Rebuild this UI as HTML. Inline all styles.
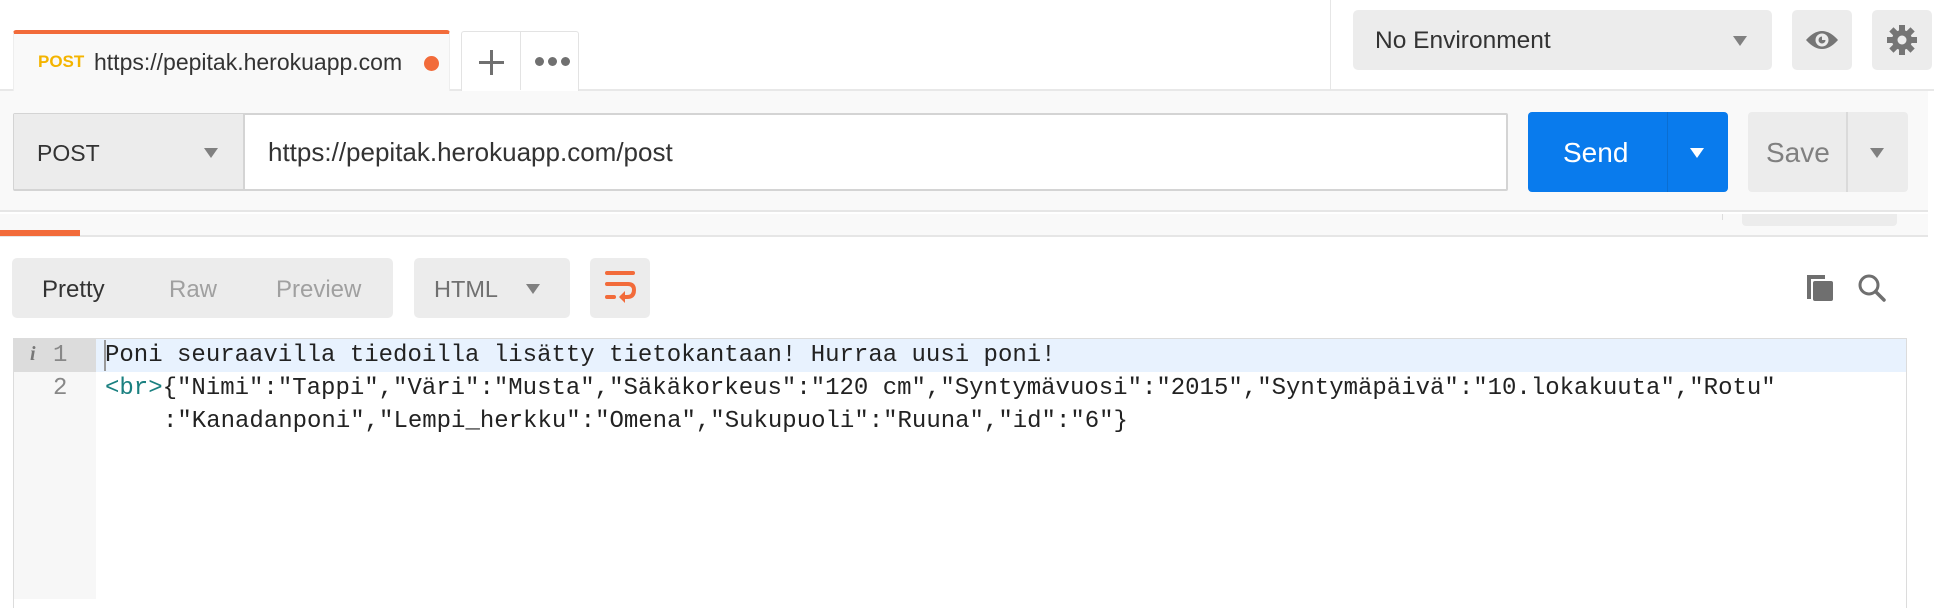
<!DOCTYPE html>
<html><head><meta charset="utf-8"><style>
*{margin:0;padding:0;box-sizing:border-box}
body{width:1934px;height:598px;background:#fff;position:relative;overflow:hidden;font-family:"Liberation Sans",sans-serif;color:#505050}
.a{position:absolute}
.tri{position:absolute;width:0;height:0;border-left:7px solid transparent;border-right:7px solid transparent;border-top:10px solid #808080}
.mono{font-family:"Liberation Mono",monospace;font-size:24px;white-space:pre;color:#222}
</style></head><body>
<div class="a" style="left:0;top:89px;width:1934px;height:2px;background:#e8e8e8"></div>
<div class="a" style="left:1330px;top:0;width:1px;height:90px;background:#e6e6e6"></div>
<div class="a" style="left:13px;top:30px;width:437px;height:62px;background:#f9f9f9;border-top:4px solid #f26b3a;border-radius:3px 3px 0 0;border-left:1px solid #eee;border-right:1px solid #eee"></div>
<div class="a" style="left:38px;top:52px;font-size:17px;font-weight:bold;color:#f4b400">POST</div>
<div class="a" style="left:94px;top:49px;font-size:23px;color:#333">https://pepitak.herokuapp.com</div>
<div class="a" style="left:424px;top:56px;width:15px;height:15px;border-radius:50%;background:#f26b3a"></div>
<div class="a" style="left:461px;top:31px;width:118px;height:60px;border:1px solid #e3e3e3;border-bottom:none;border-radius:3px 3px 0 0;background:#fff"></div>
<div class="a" style="left:520px;top:31px;width:1px;height:59px;background:#e3e3e3"></div>
<div class="a" style="left:479px;top:61px;width:25px;height:3px;background:#707070"></div>
<div class="a" style="left:490px;top:50px;width:3px;height:25px;background:#707070"></div>
<div class="a" style="left:535px;top:57px;font-size:0">
<span style="display:inline-block;width:9px;height:9px;border-radius:50%;background:#707070;margin-right:4px"></span><span style="display:inline-block;width:9px;height:9px;border-radius:50%;background:#707070;margin-right:4px"></span><span style="display:inline-block;width:9px;height:9px;border-radius:50%;background:#707070"></span></div>
<div class="a" style="left:1353px;top:10px;width:419px;height:60px;background:#ececec;border-radius:5px"></div>
<div class="a" style="left:1375px;top:27px;font-size:24.5px;color:#333">No Environment</div>
<div class="tri" style="left:1733px;top:36px"></div>
<div class="a" style="left:1792px;top:10px;width:60px;height:60px;background:#ececec;border-radius:5px"></div>
<svg class="a" style="left:1805px;top:28px" width="34" height="24" viewBox="0 0 34 24"><path d="M1 12 Q17 -6 33 12 Q17 30 1 12Z" fill="#757575"/><circle cx="17" cy="12" r="6.5" fill="#ececec"/><circle cx="17" cy="12" r="3.5" fill="#757575"/><rect x="17" y="8" width="5" height="4" fill="#ececec"/></svg>
<div class="a" style="left:1872px;top:10px;width:60px;height:60px;background:#ececec;border-radius:5px"></div>
<svg class="a" style="left:1886px;top:24px" width="32" height="32" viewBox="0 0 32 32"><g fill="#757575"><circle cx="16" cy="16" r="10"/><g id="t"><rect x="13" y="1" width="6" height="30"/></g><use href="#t" transform="rotate(45 16 16)"/><use href="#t" transform="rotate(90 16 16)"/><use href="#t" transform="rotate(135 16 16)"/></g><circle cx="16" cy="16" r="4.5" fill="#ececec"/></svg>
<div class="a" style="left:0;top:91px;width:1928px;height:121px;background:#f9f9f9;border-bottom:2px solid #e6e6e6"></div>
<div class="a" style="left:13px;top:113px;width:1495px;height:78px;background:#fff;border:2px solid #d4d4d4;border-radius:2px"></div>
<div class="a" style="left:14px;top:114px;width:231px;height:75px;background:#ececec;border-right:2px solid #d4d4d4"></div>
<div class="a" style="left:37px;top:140px;font-size:23px;color:#333">POST</div>
<div class="tri" style="left:204px;top:148px"></div>
<div class="a" style="left:268px;top:137px;font-size:26px;color:#333">https://pepitak.herokuapp.com/post</div>
<div class="a" style="left:1528px;top:112px;width:200px;height:80px;background:#097bed;border-radius:4px"></div>
<div class="a" style="left:1667px;top:112px;width:1px;height:80px;background:#0a6ed2"></div>
<div class="a" style="left:1563px;top:137px;font-size:28px;color:#fff">Send</div>
<div class="tri" style="left:1690px;top:148px;border-top-color:#fff"></div>
<div class="a" style="left:1748px;top:112px;width:160px;height:80px;background:#ececec;border-radius:4px"></div>
<div class="a" style="left:1846px;top:112px;width:2px;height:80px;background:#dadada"></div>
<div class="a" style="left:1766px;top:137px;font-size:28px;color:#808080">Save</div>
<div class="tri" style="left:1870px;top:148px"></div>
<div class="a" style="left:0;top:214px;width:1928px;height:23px;background:#f9f9f9;border-bottom:2px solid #e6e6e6"></div>
<div class="a" style="left:0;top:230px;width:80px;height:6px;background:#f26b3a"></div>
<div class="a" style="left:1722px;top:214px;width:1px;height:6px;background:#ddd"></div>
<div class="a" style="left:1742px;top:214px;width:155px;height:12px;background:#ececec;border-radius:0 0 4px 4px"></div>
<div class="a" style="left:12px;top:258px;width:381px;height:60px;background:#ececec;border-radius:5px"></div>
<div class="a" style="left:42px;top:276px;font-size:24px;color:#333">Pretty</div>
<div class="a" style="left:169px;top:276px;font-size:24px;color:#a0a0a0">Raw</div>
<div class="a" style="left:276px;top:276px;font-size:24px;color:#a0a0a0">Preview</div>
<div class="a" style="left:414px;top:258px;width:156px;height:60px;background:#ececec;border-radius:5px"></div>
<div class="a" style="left:434px;top:276px;font-size:23.5px;color:#707070">HTML</div>
<div class="tri" style="left:526px;top:284px"></div>
<div class="a" style="left:590px;top:258px;width:60px;height:60px;background:#ececec;border-radius:5px"></div>
<svg class="a" style="left:602px;top:270px" width="36" height="36" viewBox="0 0 36 36"><g stroke="#f26b3a" stroke-width="4" stroke-linecap="round" fill="none"><path d="M5 3H31"/><path d="M5 14H26Q32 14 32 20Q32 27 25 27H20"/><path d="M5 27H12"/></g><path d="M23 21L17 27L23 33Z" fill="#f26b3a"/></svg>
<svg class="a" style="left:1805px;top:273px" width="30" height="30" viewBox="0 0 30 30"><path d="M2 2H20V6H6V26H2Z" fill="#6f6f6f"/><rect x="8" y="8" width="20" height="20" rx="2" fill="#6f6f6f"/></svg>
<svg class="a" style="left:1857px;top:273px" width="30" height="30" viewBox="0 0 30 30"><circle cx="12" cy="12" r="9" stroke="#6f6f6f" stroke-width="3" fill="none"/><path d="M18.5 18.5L27 27" stroke="#6f6f6f" stroke-width="3.5" stroke-linecap="round"/></svg>
<div class="a" style="left:13px;top:338px;width:1894px;height:270px;border:1px solid #dcdcdc;border-bottom:none;background:#fff"></div>
<div class="a" style="left:14px;top:339px;width:82px;height:260px;background:#f7f7f7"></div>
<div class="a" style="left:14px;top:339px;width:82px;height:33px;background:#dcdcdc"></div>
<div class="a" style="left:96px;top:339px;width:1810px;height:33px;background:#e8f2fe"></div>
<div class="a" style="left:104px;top:340px;width:2px;height:31px;background:#999"></div>
<div class="a" style="left:30px;top:343px;font-size:20px;font-weight:bold;font-style:italic;color:#777;font-family:'Liberation Serif',serif">i</div>
<div class="a mono" style="left:53px;top:342px;color:#888">1</div>
<div class="a mono" style="left:53px;top:375px;color:#888">2</div>
<div class="a mono" style="left:105px;top:342px">Poni seuraavilla tiedoilla lisätty tietokantaan! Hurraa uusi poni!</div>
<div class="a mono" style="left:105px;top:375px"><span style="color:#1a8080">&lt;br&gt;</span>{"Nimi":"Tappi","Väri":"Musta","Säkäkorkeus":"120 cm","Syntymävuosi":"2015","Syntymäpäivä":"10.lokakuuta","Rotu"</div>
<div class="a mono" style="left:163px;top:408px">:"Kanadanponi","Lempi_herkku":"Omena","Sukupuoli":"Ruuna","id":"6"}</div>
</body></html>
